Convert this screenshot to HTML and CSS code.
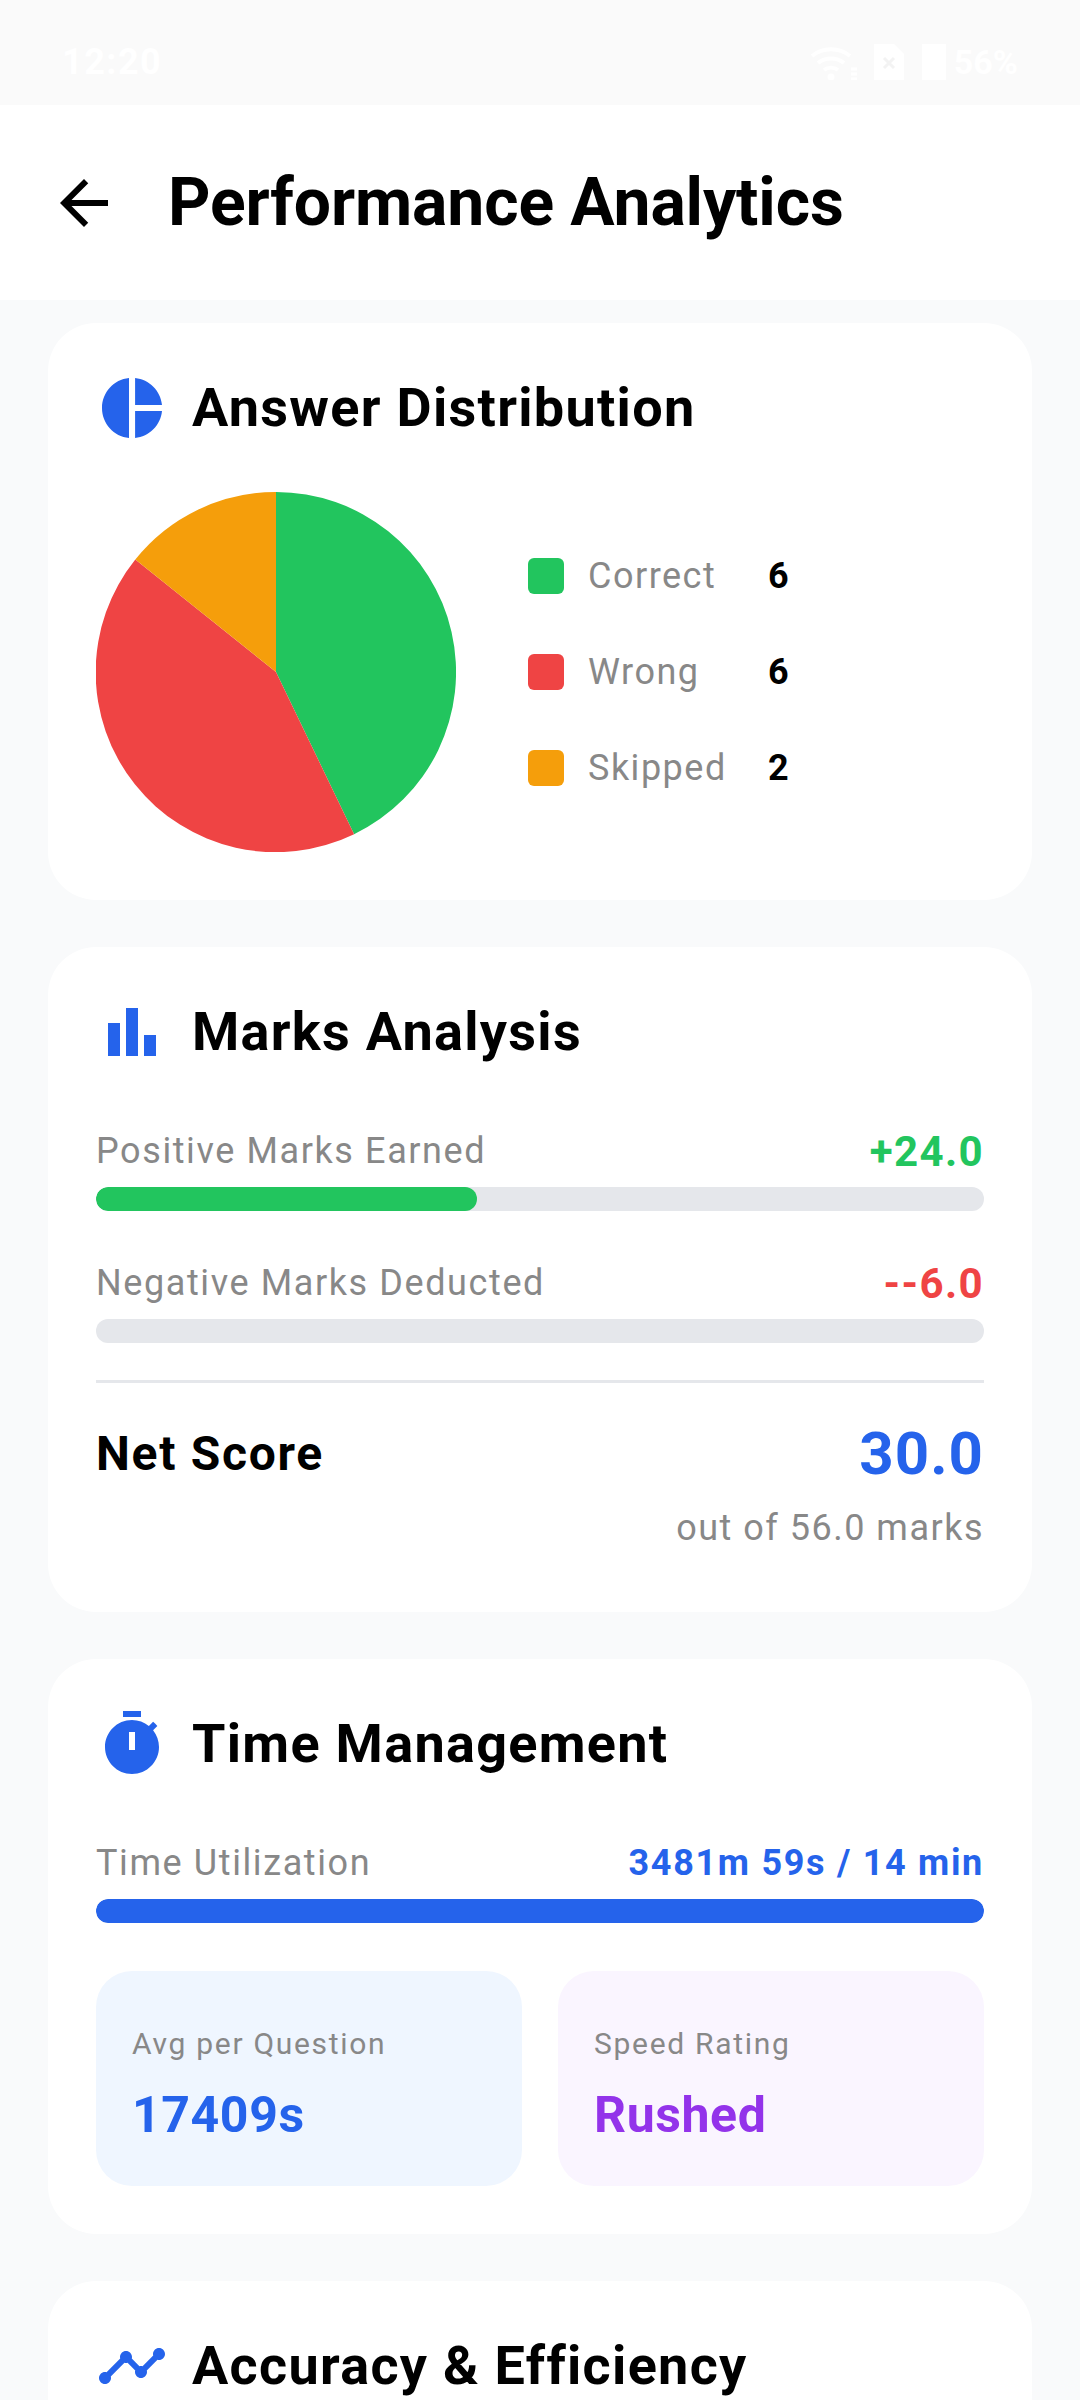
FILE: index.html
```html
<!DOCTYPE html>
<html lang="en">
  <head>
    <meta charset="UTF-8" />
    <meta name="viewport" content="width=device-width, initial-scale=1.0" />
    <title>Performance Analytics</title>
    <link rel="stylesheet" href="styles.css">
  </head>
  <body>
    <div class="status-bar">
      <span class="status-time">12:20</span>
      <div class="status-icons">
        <svg class="status-wifi" viewBox="0 0 48 36" fill="none" stroke="#fff" stroke-width="4">
          <path d="M2 12a30 30 0 0 1 38 0" />
          <path d="M8 19a21 21 0 0 1 26 0" />
          <path d="M14 26a12 12 0 0 1 14 0" />
          <path d="M21 33l0 0" stroke-width="7" stroke-linecap="round" />
          <path d="M41 25h6M41 30h6M41 35h6" stroke-width="3" />
        </svg>
        <svg class="status-sim" viewBox="0 0 30 36">
          <path fill="#fff" d="M0 0h20l10 10v26H0z" />
          <path stroke="#f3f3f3" stroke-width="3" d="M10 14l10 10M20 14L10 24" />
        </svg>
        <div class="status-battery"></div>
        <span class="status-pct">56%</span>
      </div>
    </div>

    <header class="app-bar">
      <svg class="back-icon" viewBox="0 0 24 24"><path d="M20 11H7.83l5.59-5.59L12 4l-8 8 8 8 1.41-1.41L7.83 13H20v-2z" /></svg>
      <h1 class="app-title">Performance Analytics</h1>
    </header>

    <main class="content">
      <section class="card">
        <div class="card-head">
          <svg class="card-icon" viewBox="0 0 24 24"><path d="M11 2v20c-5.07-.5-9-4.79-9-10s3.93-9.5 9-10zm2.03 0v8.99H22c-.47-4.74-4.24-8.52-8.97-8.99zm0 11.01V22c4.74-.47 8.5-4.25 8.97-8.99h-8.97z" /></svg>
          <h2 class="card-title">Answer Distribution</h2>
        </div>
        <div class="dist-row">
          <svg class="pie" viewBox="0 0 360 360">
            <path fill="#22c55e" d="M180 180V0A180 180 0 0 1 258.1 342.2z" />
            <path fill="#ef4444" d="M180 180L258.1 342.2A180 180 0 0 1 39.3 67.5z" />
            <path fill="#f59e0b" d="M180 180L39.3 67.5A180 180 0 0 1 180 0z" />
          </svg>
          <div class="legend">
            <div class="legend-row">
              <span class="swatch swatch-green"></span>
              <span class="legend-label">Correct</span>
              <span class="legend-value">6</span>
            </div>
            <div class="legend-row">
              <span class="swatch swatch-red"></span>
              <span class="legend-label">Wrong</span>
              <span class="legend-value">6</span>
            </div>
            <div class="legend-row">
              <span class="swatch swatch-amber"></span>
              <span class="legend-label">Skipped</span>
              <span class="legend-value">2</span>
            </div>
          </div>
        </div>
      </section>

      <section class="card">
        <div class="card-head">
          <svg class="card-icon" viewBox="0 0 24 24"><path d="M4 9h4v11H4zm12 4h4v7h-4zm-6-9h4v16h-4z" /></svg>
          <h2 class="card-title">Marks Analysis</h2>
        </div>
        <div class="metric metric-first">
          <div class="metric-row">
            <span class="metric-label">Positive Marks Earned</span>
            <span class="metric-value text-green">+24.0</span>
          </div>
          <div class="track"><div class="fill fill-green" style="width: 42.9%"></div></div>
        </div>
        <div class="metric">
          <div class="metric-row">
            <span class="metric-label">Negative Marks Deducted</span>
            <span class="metric-value text-red">--6.0</span>
          </div>
          <div class="track"></div>
        </div>
        <div class="net">
          <div class="net-row">
            <span class="net-label">Net Score</span>
            <span class="net-value">30.0</span>
          </div>
          <div class="net-sub">out of 56.0 marks</div>
        </div>
      </section>

      <section class="card">
        <div class="card-head">
          <svg class="card-icon" viewBox="0 0 24 24"><path fill-rule="evenodd" d="M9 1h6v2H9zM19.03 7.39l1.42-1.42c-.43-.51-.9-.99-1.41-1.41l-1.42 1.42C16.07 4.74 14.12 4 12 4c-4.97 0-9 4.03-9 9s4.02 9 9 9 9-4.03 9-9c0-2.12-.74-4.07-1.97-5.61zM13 14h-2V8h2v6z" /></svg>
          <h2 class="card-title">Time Management</h2>
        </div>
        <div class="metric metric-first">
          <div class="metric-row">
            <span class="metric-label">Time Utilization</span>
            <span class="metric-value-small">3481m 59s / 14 min</span>
          </div>
          <div class="track"><div class="fill fill-blue" style="width: 100%"></div></div>
        </div>
        <div class="tiles">
          <div class="tile tile-blue">
            <div class="tile-label">Avg per Question</div>
            <div class="tile-value text-blue">17409s</div>
          </div>
          <div class="tile tile-purple">
            <div class="tile-label">Speed Rating</div>
            <div class="tile-value text-purple">Rushed</div>
          </div>
        </div>
      </section>

      <section class="card">
        <div class="card-head">
          <svg class="card-icon" viewBox="0 0 24 24"><path d="M23 8c0 1.1-.9 2-2 2-.18 0-.35-.02-.51-.07l-3.56 3.55c.05.16.07.34.07.52 0 1.1-.9 2-2 2s-2-.9-2-2c0-.18.02-.36.07-.52l-2.55-2.55c-.16.05-.34.07-.52.07s-.36-.02-.52-.07l-4.55 4.56c.05.16.07.33.07.51 0 1.1-.9 2-2 2s-2-.9-2-2 .9-2 2-2c.18 0 .35.02.51.07l4.56-4.55C8.02 9.36 8 9.18 8 9c0-1.1.9-2 2-2s2 .9 2 2c0 .18-.02.36-.07.52l2.55 2.55c.16-.05.34-.07.52-.07s.36.02.52.07l3.55-3.56C19.02 8.35 19 8.18 19 8c0-1.1.9-2 2-2s2 .9 2 2z" /></svg>
          <h2 class="card-title">Accuracy &amp; Efficiency</h2>
        </div>
      </section>
    </main>
  </body>
</html>
```

FILE: styles.css
```css
html,
body {
  height: 2400px;
  margin: 0;
  overflow: hidden;
}

body {
  background: #f9fafb;
  font-family: Roboto, "Liberation Sans", sans-serif;
  color: #000;
}

/* status bar */
.status-bar {
  height: 105px;
  display: flex;
  align-items: center;
  justify-content: space-between;
  padding: 18px 62px 0;
  box-sizing: border-box;
  color: #fff;
  background: #fafafa;
}
.status-time {
  font-size: 36px;
  font-weight: 700;
  letter-spacing: 1.5px;
}
.status-icons {
  display: flex;
  align-items: center;
}
.status-wifi {
  width: 48px;
  height: 36px;
  margin-right: 16px;
}
.status-sim {
  width: 30px;
  height: 36px;
  margin-right: 18px;
}
.status-battery {
  width: 24px;
  height: 36px;
  background: #fff;
  margin-right: 8px;
}
.status-pct {
  font-size: 34px;
  font-weight: 700;
}

/* app bar */
.app-bar {
  height: 195px;
  background: #fff;
  display: flex;
  align-items: center;
  padding-left: 48px;
}
.back-icon {
  width: 72px;
  height: 72px;
  margin-right: 48px;
}
.app-title {
  margin: 0;
  font-size: 66px;
  font-weight: 700;
  letter-spacing: -0.1px;
}

/* cards */
.content {
  padding: 23px 48px 0;
  display: flex;
  flex-direction: column;
  gap: 47px;
}
.card {
  background: #fff;
  border-radius: 48px;
  padding: 49px 48px 48px;
}
.card-head {
  display: flex;
  align-items: center;
  gap: 24px;
  height: 72px;
}
.card-icon {
  width: 72px;
  height: 72px;
  fill: #2563eb;
  flex: none;
}
.card-title {
  margin: 0 0 1px;
  font-size: 54px;
  font-weight: 700;
  letter-spacing: 1.3px;
}

/* answer distribution */
.dist-row {
  display: flex;
  align-items: center;
  margin-top: 48px;
}
.pie {
  width: 360px;
  height: 360px;
  flex: none;
}
.legend {
  margin-left: 72px;
  display: flex;
  flex-direction: column;
  gap: 60px;
}
.legend-row {
  display: flex;
  align-items: center;
  height: 36px;
}
.swatch {
  width: 36px;
  height: 36px;
  border-radius: 6px;
  margin-right: 24px;
}
.swatch-green { background: #22c55e; }
.swatch-red { background: #ef4444; }
.swatch-amber { background: #f59e0b; }
.legend-label {
  width: 180px;
  font-size: 36px;
  letter-spacing: 1.5px;
  color: #888;
}
.legend-value {
  font-size: 36px;
  font-weight: 700;
}

/* marks */
.metric {
  margin-top: 37px;
}
.metric-first {
  margin-top: 48px;
}
.metric-row {
  display: flex;
  align-items: center;
  justify-content: space-between;
  height: 68px;
  padding-top: 2px;
  box-sizing: border-box;
  margin-bottom: 3px;
}
.metric-label {
  font-size: 36px;
  letter-spacing: 1.6px;
  color: #888;
}
.metric-value {
  font-size: 42px;
  font-weight: 700;
  letter-spacing: 1.4px;
}
.metric-value-small {
  font-size: 36px;
  font-weight: 700;
  letter-spacing: 1.7px;
  color: #2563eb;
}
.track {
  height: 24px;
  background: #e5e7eb;
  border-radius: 12px;
  overflow: hidden;
}
.fill {
  height: 100%;
  border-radius: 12px;
}
.fill-green { background: #22c55e; }
.fill-blue { background: #2563eb; }
.text-green { color: #22c55e; }
.text-red { color: #ef4444; }
.text-blue { color: #2563eb; }
.text-purple { color: #9333ea; }

.net {
  margin-top: 37px;
  border-top: 3px solid #e5e7eb;
  padding: 34px 0 15px;
}
.net-row {
  display: flex;
  align-items: center;
  justify-content: space-between;
  height: 72px;
}
.net-label {
  font-size: 48px;
  font-weight: 700;
  letter-spacing: 1.7px;
}
.net-value {
  font-size: 60px;
  font-weight: 700;
  letter-spacing: 1px;
  color: #2563eb;
}
.net-sub {
  margin-top: 18px;
  text-align: right;
  font-size: 36px;
  letter-spacing: 1.5px;
  color: #888;
}

/* time tiles */
.tiles {
  display: grid;
  grid-template-columns: 1fr 1fr;
  gap: 36px;
  margin-top: 48px;
}
.tile {
  height: 215px;
  box-sizing: border-box;
  border-radius: 36px;
  padding: 55px 36px 0;
}
.tile-blue { background: #eff6ff; }
.tile-purple { background: #faf5ff; }
.tile-label {
  font-size: 30px;
  letter-spacing: 1.7px;
  color: #888;
}
.tile-value {
  margin-top: 25px;
  font-size: 50px;
  font-weight: 700;
  letter-spacing: 0.6px;
}
```
